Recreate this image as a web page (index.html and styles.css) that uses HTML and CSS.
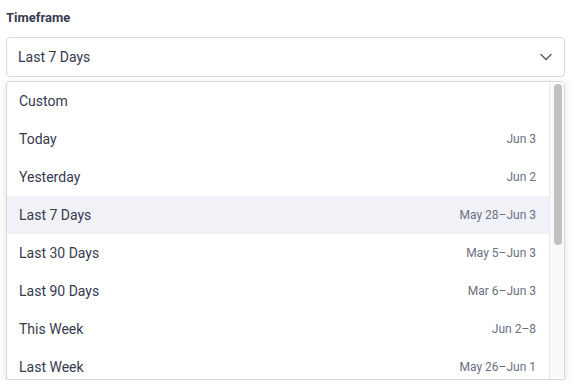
FILE: index.html
```html
<!DOCTYPE html>
<html lang="en">
<head>
    <meta charset="UTF-8">
    <title>Timeframe</title>
    <link rel="stylesheet" href="styles.css">
</head>
<body>
    <div class="field">
        <label class="field-label">Timeframe</label>
        <div class="select">
            <span class="select-value">Last 7 Days</span>
            <svg class="chevron" width="12" height="8" viewBox="0 0 12 8">
                <path d="M1 1.5 L6 6.5 L11 1.5" fill="none" stroke="currentColor" stroke-width="1.5" stroke-linecap="round" stroke-linejoin="round"/>
            </svg>
        </div>
        <div class="menu">
            <ul class="menu-list">
                <li class="option"><span>Custom</span></li>
                <li class="option"><span>Today</span><span class="range">Jun 3</span></li>
                <li class="option"><span>Yesterday</span><span class="range">Jun 2</span></li>
                <li class="option selected"><span>Last 7 Days</span><span class="range">May 28–Jun 3</span></li>
                <li class="option"><span>Last 30 Days</span><span class="range">May 5–Jun 3</span></li>
                <li class="option"><span>Last 90 Days</span><span class="range">Mar 6–Jun 3</span></li>
                <li class="option"><span>This Week</span><span class="range">Jun 2–8</span></li>
                <li class="option"><span>Last Week</span><span class="range">May 26–Jun 1</span></li>
            </ul>
            <div class="scrollbar"><div class="thumb"></div></div>
        </div>
    </div>
</body>
</html>
```

FILE: styles.css
```css
body {
    margin: 0;
    padding: 10px 6px 0;
    font-family: Roboto, "Noto Sans", sans-serif;
    color: #363a4e;
    background-color: #fff;
}

.field {
    width: 559px;
}

.field-label {
    display: block;
    font-size: 13px;
    font-weight: 700;
    line-height: 16px;
    margin-bottom: 11px;
}

.select {
    display: flex;
    align-items: center;
    justify-content: space-between;
    height: 38px;
    padding: 0 12px 0 11px;
    border: 1px solid #d8d9e2;
    border-radius: 4px;
    font-size: 14px;
}

.chevron {
    color: #5d6174;
}

/* dropdown panel, scrolled list with its own scrollbar drawn on top */
.menu {
    position: relative;
    margin-top: 4px;
    height: 297px;
    overflow: hidden;
    border: 1px solid #d8d9e2;
    border-radius: 4px 4px 0 0;
    box-shadow: 0 2px 8px rgba(0, 0, 0, 0.12);
}

.menu-list {
    list-style: none;
    margin: 0 15px 0 0;
    padding: 0;
}

.scrollbar {
    position: absolute;
    top: 0;
    right: 0;
    bottom: 0;
    width: 14px;
    background-color: #fafafa;
    border-left: 1px solid #e8e8e8;
}

.thumb {
    position: absolute;
    top: 2px;
    left: 4px;
    width: 8px;
    height: 161px;
    background-color: #c1c1c1;
    border-radius: 4px;
}

.option {
    display: flex;
    align-items: center;
    justify-content: space-between;
    height: 38px;
    padding: 0 13px 0 12px;
    font-size: 14px;
}

.option.selected {
    background-color: #f1f2f7;
}

.range {
    font-size: 12px;
    color: #6b6f82;
}
```
